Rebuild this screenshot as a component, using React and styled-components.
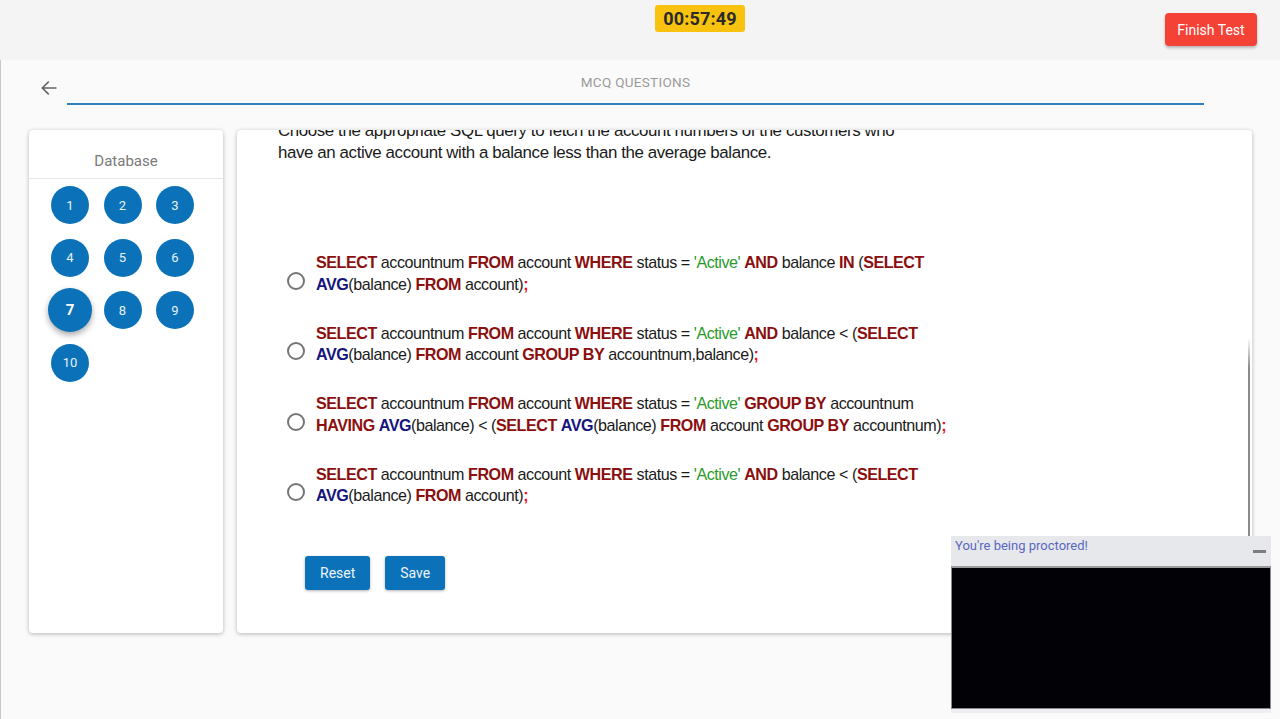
import React from 'react'
import styled, { createGlobalStyle, css } from 'styled-components'

const GlobalStyle = createGlobalStyle`
  html, body {
    margin: 0;
    padding: 0;
    height: 100%;
    overflow: hidden;
    background: #fafafa;
    font-family: Roboto, "Liberation Sans", Arial, sans-serif;
  }
  * { box-sizing: border-box; }
`

const Page = styled.div`
  width: 1280px;
  height: 719px;
  display: flex;
  flex-direction: column;
`

const TopBar = styled.div`
  height: 60px;
  flex: none;
  background: #f4f4f4;
  display: grid;
  grid-template-columns: 1fr auto 1fr;
  align-items: start;
  padding-left: 120px;
`

const Timer = styled.div`
  grid-column: 2;
  margin-top: 5px;
  background: #f9c20f;
  border-radius: 3px;
  padding: 0 8px;
  height: 27px;
  line-height: 27px;
  font-size: 18px;
  font-weight: 700;
  color: #2a2a2a;
  letter-spacing: 0.2px;
`

const FinishButton = styled.button`
  grid-column: 3;
  justify-self: end;
  margin: 13px 23px 0 0;
  height: 33px;
  width: 92px;
  border: none;
  border-radius: 4px;
  background: #f44336;
  color: #fff;
  font-family: Roboto, "Liberation Sans", sans-serif;
  font-size: 14px;
  box-shadow: 0 2px 3px rgba(0, 0, 0, 0.25);
`

const Content = styled.div`
  flex: 1;
  border-left: 1px solid #c8c8c8;
  background: #fafafa;
  padding: 0 28px 0 28px;
  display: flex;
  flex-direction: column;
`

const HeaderRow = styled.div`
  display: flex;
  align-items: flex-start;
  height: 70px;
  padding-left: 10px;
`

const BackArrow = styled.svg`
  margin-top: 18px;
  width: 20px;
  height: 20px;
  flex: none;
`

const TitleBlock = styled.div`
  margin-left: 8px;
  width: 1137px;
  height: 45px;
  border-bottom: 2px solid #2f7fbf;
  text-align: center;
  padding-top: 14px;
  font-size: 13.5px;
  color: #9a9a9a;
  letter-spacing: 0.3px;
`

const Body = styled.div`
  display: flex;
  gap: 14px;
`

const Card = styled.div`
  background: #fff;
  border-radius: 4px;
  box-shadow: 0 1px 4px rgba(0, 0, 0, 0.28);
  height: 503px;
`

const Sidebar = styled(Card)`
  width: 194px;
  flex: none;
`

const SideTitle = styled.div`
  height: 49px;
  border-bottom: 1px solid #e6e6e6;
  text-align: center;
  padding-top: 22px;
  font-size: 15px;
  color: #7a7a7a;
`

const Grid = styled.div`
  display: grid;
  grid-template-columns: repeat(3, 38px);
  grid-auto-rows: 38px;
  column-gap: 14.5px;
  row-gap: 14.5px;
  padding: 7px 0 0 22px;
`

const Bubble = styled.div`
  width: 38px;
  height: 38px;
  border-radius: 50%;
  background: #0b72b9;
  color: #e8f1f8;
  font-size: 13px;
  display: flex;
  align-items: center;
  justify-content: center;
  place-self: center;
  ${(p) => p.$active && css`
    width: 44px;
    height: 44px;
    font-size: 15px;
    font-weight: 700;
    color: #fff;
    box-shadow: 0 3px 6px rgba(0, 0, 0, 0.35);
  `}
`

const Main = styled(Card)`
  flex: 1;
  position: relative;
  overflow: hidden;
  padding: 0 40px 0 41px;
  &::after {
    content: '';
    position: absolute;
    right: 2px;
    top: 208px;
    width: 2px;
    height: 198px;
    background: linear-gradient(to bottom, rgba(120,120,120,0), #8a8a8a 15%, #8a8a8a);
  }
`

/* the question sits scrolled a little past its first line */
const Question = styled.p`
  margin: -10px 0 0;
  font-family: "Liberation Sans", Arial, sans-serif;
  font-size: 16.9px;
  line-height: 22px;
  color: #1a1a1a;
  letter-spacing: -0.4px;
`

const Options = styled.div`
  margin-top: 88px;
  display: flex;
  flex-direction: column;
  gap: 27.6px;
`

const Option = styled.label`
  display: flex;
  align-items: center;
  gap: 11px;
  padding-left: 9px;
`

const Radio = styled.span`
  width: 18px;
  height: 18px;
  border: 2px solid #757575;
  border-radius: 50%;
  flex: none;
  margin-top: 14px;
`

const Code = styled.div`
  font-family: "Liberation Sans", Arial, sans-serif;
  font-size: 16.1px;
  line-height: 21.5px;
  color: #1a1a1a;
  letter-spacing: -0.45px;
  width: 680px;
`

const Kw = styled.b`
  color: #8b0f0f;
`
const Fn = styled.b`
  color: #15157d;
`
const Str = styled.span`
  color: #2a9a2a;
`
const Semi = styled.b`
  color: #ea1030;
`

const Actions = styled.div`
  display: flex;
  gap: 15px;
  margin-top: 49px;
  padding-left: 27px;
`

const ActionButton = styled.button`
  height: 34px;
  padding: 0 15px;
  border: none;
  border-radius: 3px;
  background: #0b72b9;
  color: #eef5fb;
  font-family: Roboto, "Liberation Sans", sans-serif;
  font-size: 14px;
  box-shadow: 0 1px 3px rgba(0, 0, 0, 0.3);
`

const Proctor = styled.div`
  position: fixed;
  left: 951px;
  top: 536px;
  width: 320px;
  height: 177px;
  background: #eceef1;
  display: flex;
  flex-direction: column;
`

const ProctorHead = styled.div`
  height: 30px;
  display: flex;
  justify-content: space-between;
  padding: 2px 5px 0 4px;
  font-size: 13px;
  color: #5a67c0;
  background: #e6e8ec;
`

const Minimize = styled.span`
  width: 13px;
  height: 3px;
  background: #7d7d7d;
  margin-top: 12px;
`

const Video = styled.div`
  height: 143px;
  background: #020206;
  border: 1px solid #8a8a8a;
  border-top: 2px solid #9a9a9a;
`

const questions = [
  [
    <Kw key='a'>SELECT</Kw>, ' accountnum ', <Kw key='b'>FROM</Kw>, ' account ', <Kw key='c'>WHERE</Kw>, ' status = ', <Str key='d'>'Active'</Str>, ' ', <Kw key='e'>AND</Kw>, ' balance ', <Kw key='f'>IN</Kw>, ' (', <Kw key='g'>SELECT</Kw>, <br key='br' />,
    <Fn key='h'>AVG</Fn>, '(balance) ', <Kw key='i'>FROM</Kw>, ' account)', <Semi key='j'>;</Semi>
  ],
  [
    <Kw key='a'>SELECT</Kw>, ' accountnum ', <Kw key='b'>FROM</Kw>, ' account ', <Kw key='c'>WHERE</Kw>, ' status = ', <Str key='d'>'Active'</Str>, ' ', <Kw key='e'>AND</Kw>, ' balance < (', <Kw key='g'>SELECT</Kw>, <br key='br' />,
    <Fn key='h'>AVG</Fn>, '(balance) ', <Kw key='i'>FROM</Kw>, ' account ', <Kw key='k'>GROUP BY</Kw>, ' accountnum,balance)', <Semi key='j'>;</Semi>
  ],
  [
    <Kw key='a'>SELECT</Kw>, ' accountnum ', <Kw key='b'>FROM</Kw>, ' account ', <Kw key='c'>WHERE</Kw>, ' status = ', <Str key='d'>'Active'</Str>, ' ', <Kw key='e'>GROUP BY</Kw>, ' accountnum', <br key='br' />,
    <Kw key='f'>HAVING</Kw>, ' ', <Fn key='h'>AVG</Fn>, '(balance) < (', <Kw key='g'>SELECT</Kw>, ' ', <Fn key='l'>AVG</Fn>, '(balance) ', <Kw key='i'>FROM</Kw>, ' account ', <Kw key='k'>GROUP BY</Kw>, ' accountnum)', <Semi key='j'>;</Semi>
  ],
  [
    <Kw key='a'>SELECT</Kw>, ' accountnum ', <Kw key='b'>FROM</Kw>, ' account ', <Kw key='c'>WHERE</Kw>, ' status = ', <Str key='d'>'Active'</Str>, ' ', <Kw key='e'>AND</Kw>, ' balance < (', <Kw key='g'>SELECT</Kw>, <br key='br' />,
    <Fn key='h'>AVG</Fn>, '(balance) ', <Kw key='i'>FROM</Kw>, ' account)', <Semi key='j'>;</Semi>
  ]
]

export default function App () {
  return (
    <Page>
      <GlobalStyle />
      <TopBar>
        <Timer>00:57:49</Timer>
        <FinishButton>Finish Test</FinishButton>
      </TopBar>
      <Content>
        <HeaderRow>
          <BackArrow viewBox='0 0 24 24' fill='none' stroke='#666' strokeWidth='2' strokeLinecap='square'>
            <path d='M20 12H5M11 5l-7 7 7 7' />
          </BackArrow>
          <TitleBlock>MCQ QUESTIONS</TitleBlock>
        </HeaderRow>
        <Body>
          <Sidebar>
            <SideTitle>Database</SideTitle>
            <Grid>
              {[1, 2, 3, 4, 5, 6, 7, 8, 9, 10].map((n) => (
                <Bubble key={n} $active={n === 7}>{n}</Bubble>
              ))}
            </Grid>
          </Sidebar>
          <Main>
            <Question>
              Choose the appropriate SQL query to fetch the account numbers of the customers who<br />
              have an active account with a balance less than the average balance.
            </Question>
            <Options>
              {questions.map((q, i) => (
                <Option key={i}>
                  <Radio />
                  <Code>{q}</Code>
                </Option>
              ))}
            </Options>
            <Actions>
              <ActionButton>Reset</ActionButton>
              <ActionButton>Save</ActionButton>
            </Actions>
          </Main>
        </Body>
      </Content>
      <Proctor>
        <ProctorHead>
          <span>You're being proctored!</span>
          <Minimize />
        </ProctorHead>
        <Video />
      </Proctor>
    </Page>
  )
}
